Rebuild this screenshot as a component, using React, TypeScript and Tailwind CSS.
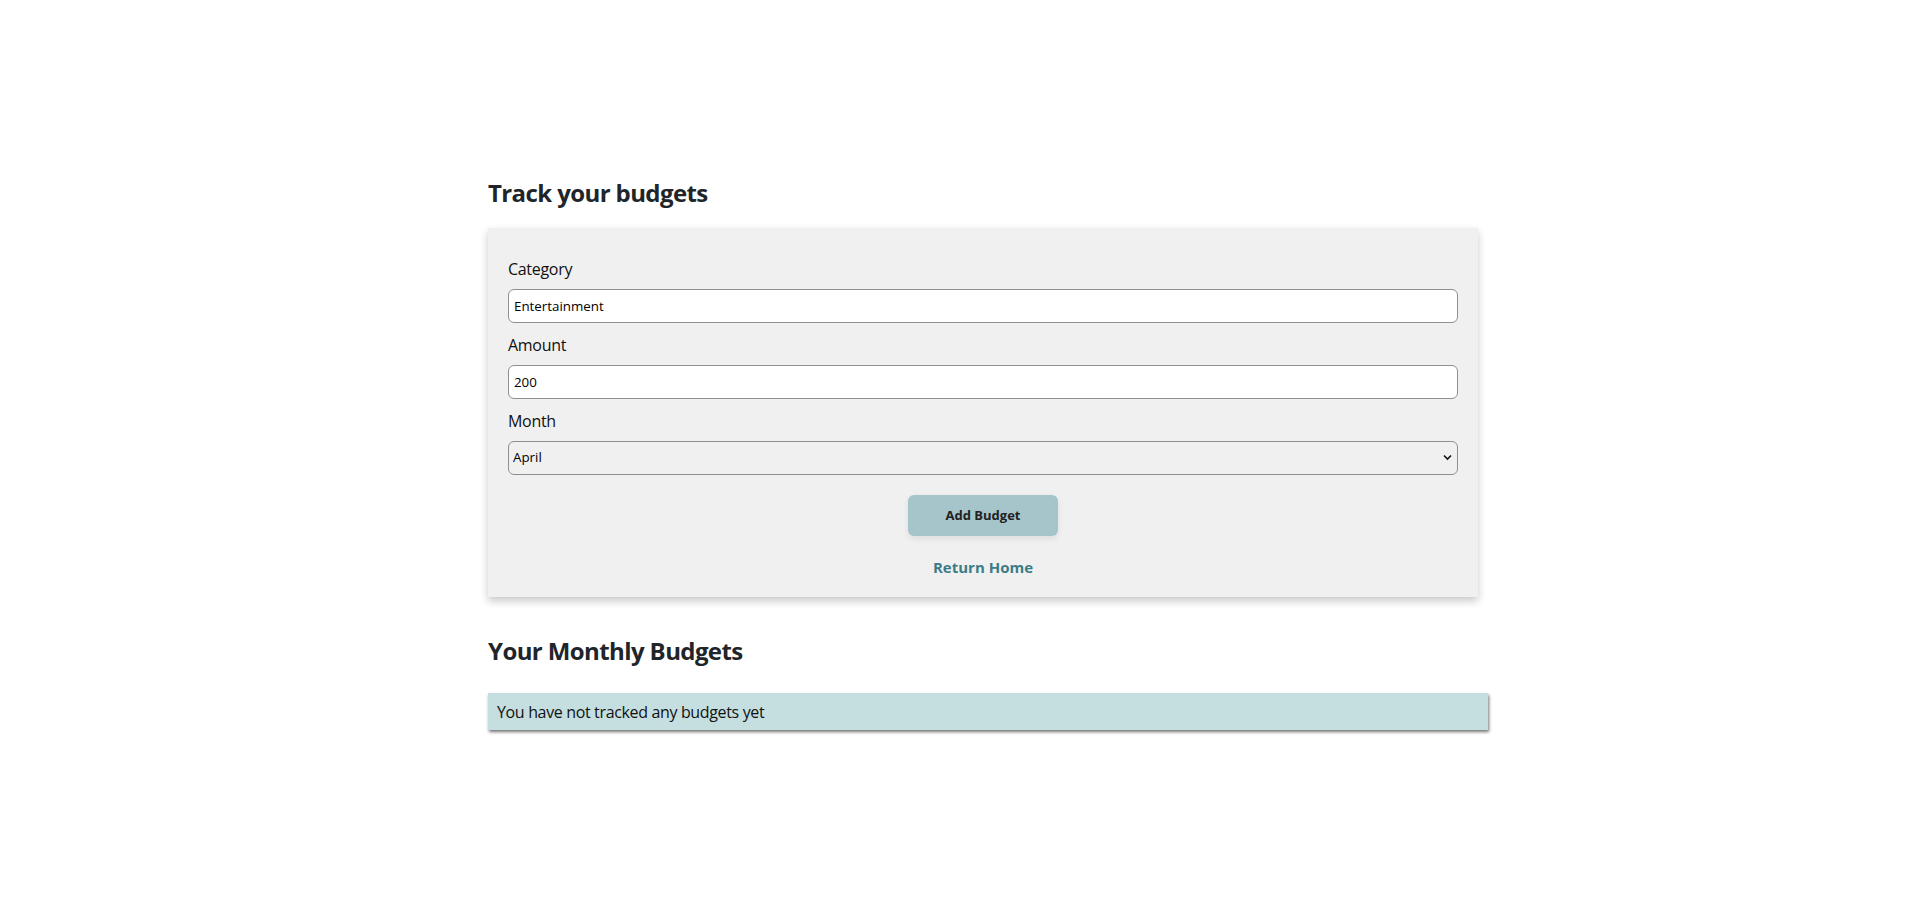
import { useState } from 'react';

const font = { fontFamily: '"Open Sans", "Noto Sans", sans-serif' };

export default function App() {
  const [category, setCategory] = useState('Entertainment');
  const [amount, setAmount] = useState('200');
  const [month, setMonth] = useState('April');

  const months = [
    'January', 'February', 'March', 'April', 'May', 'June',
    'July', 'August', 'September', 'October', 'November', 'December',
  ];

  return (
    <div className="min-h-screen bg-white text-[#111]" style={font}>
      <div className="ml-[488px] w-[1000px] pt-[177px]">
        <h2 className="text-[24px] leading-[32px] font-bold tracking-[-0.6px] text-[#212529]">Track your budgets</h2>

        <div className="mt-[19px] w-[990px] bg-[#f0f0f0] px-5 pt-[31px] pb-[20px] shadow-[0_4px_8px_rgba(0,0,0,0.22)]">
          <label className="block text-[16px] leading-[20px] tracking-[-0.3px] mb-[10px]">Category</label>
          <input
            value={category}
            onChange={(e) => setCategory(e.target.value)}
            className="block w-full h-[34px] rounded-[6px] border border-[#8f8f8f] bg-white px-[5px] text-[13.33px] text-black outline-none"
          />

          <label className="block text-[16px] leading-[20px] tracking-[-0.3px] mt-[12px] mb-[10px]">Amount</label>
          <input
            value={amount}
            onChange={(e) => setAmount(e.target.value)}
            className="block w-full h-[34px] rounded-[6px] border border-[#8f8f8f] bg-white px-[5px] text-[13.33px] text-black outline-none"
          />

          <label className="block text-[16px] leading-[20px] tracking-[-0.3px] mt-[12px] mb-[10px]">Month</label>
          <div className="relative">
            <select
              value={month}
              onChange={(e) => setMonth(e.target.value)}
              className="block w-full h-[34px] appearance-none rounded-[6px] border border-[#8f8f8f] bg-transparent px-[4px] text-[13.33px] text-black outline-none"
            >
              {months.map((m) => (
                <option key={m} value={m}>{m}</option>
              ))}
            </select>
            <svg
              className="pointer-events-none absolute right-[6px] top-[13px] w-[9px] h-[7px]"
              viewBox="0 0 9 7"
              fill="none"
              stroke="#111"
              strokeWidth={1.6}
            >
              <path d="M1 1.5l3.5 3.5L8 1.5" />
            </svg>
          </div>

          <div className="flex flex-col items-center">
            <button className="mt-5 w-[150px] h-[41px] rounded-[6px] bg-[#a6c5ca] text-[13px] font-bold text-[#222] shadow-[0_3px_6px_rgba(0,0,0,0.08)]">
              Add Budget
            </button>
            <a href="#" className="mt-[21px] text-[15px] leading-[20px] font-bold text-[#3b7c87]">
              Return Home
            </a>
          </div>
        </div>

        <h2 className="mt-[38px] text-[24px] leading-[32px] font-bold tracking-[-0.6px] text-[#212529]">Your Monthly Budgets</h2>

        <div className="mt-[26px] h-[37px] flex items-center bg-[#c5dfe0] pl-[9px] text-[16px] tracking-[-0.35px] text-[#111] shadow-[1px_2px_3px_rgba(0,0,0,0.55)]">
          You have not tracked any budgets yet
        </div>
      </div>
    </div>
  );
}
